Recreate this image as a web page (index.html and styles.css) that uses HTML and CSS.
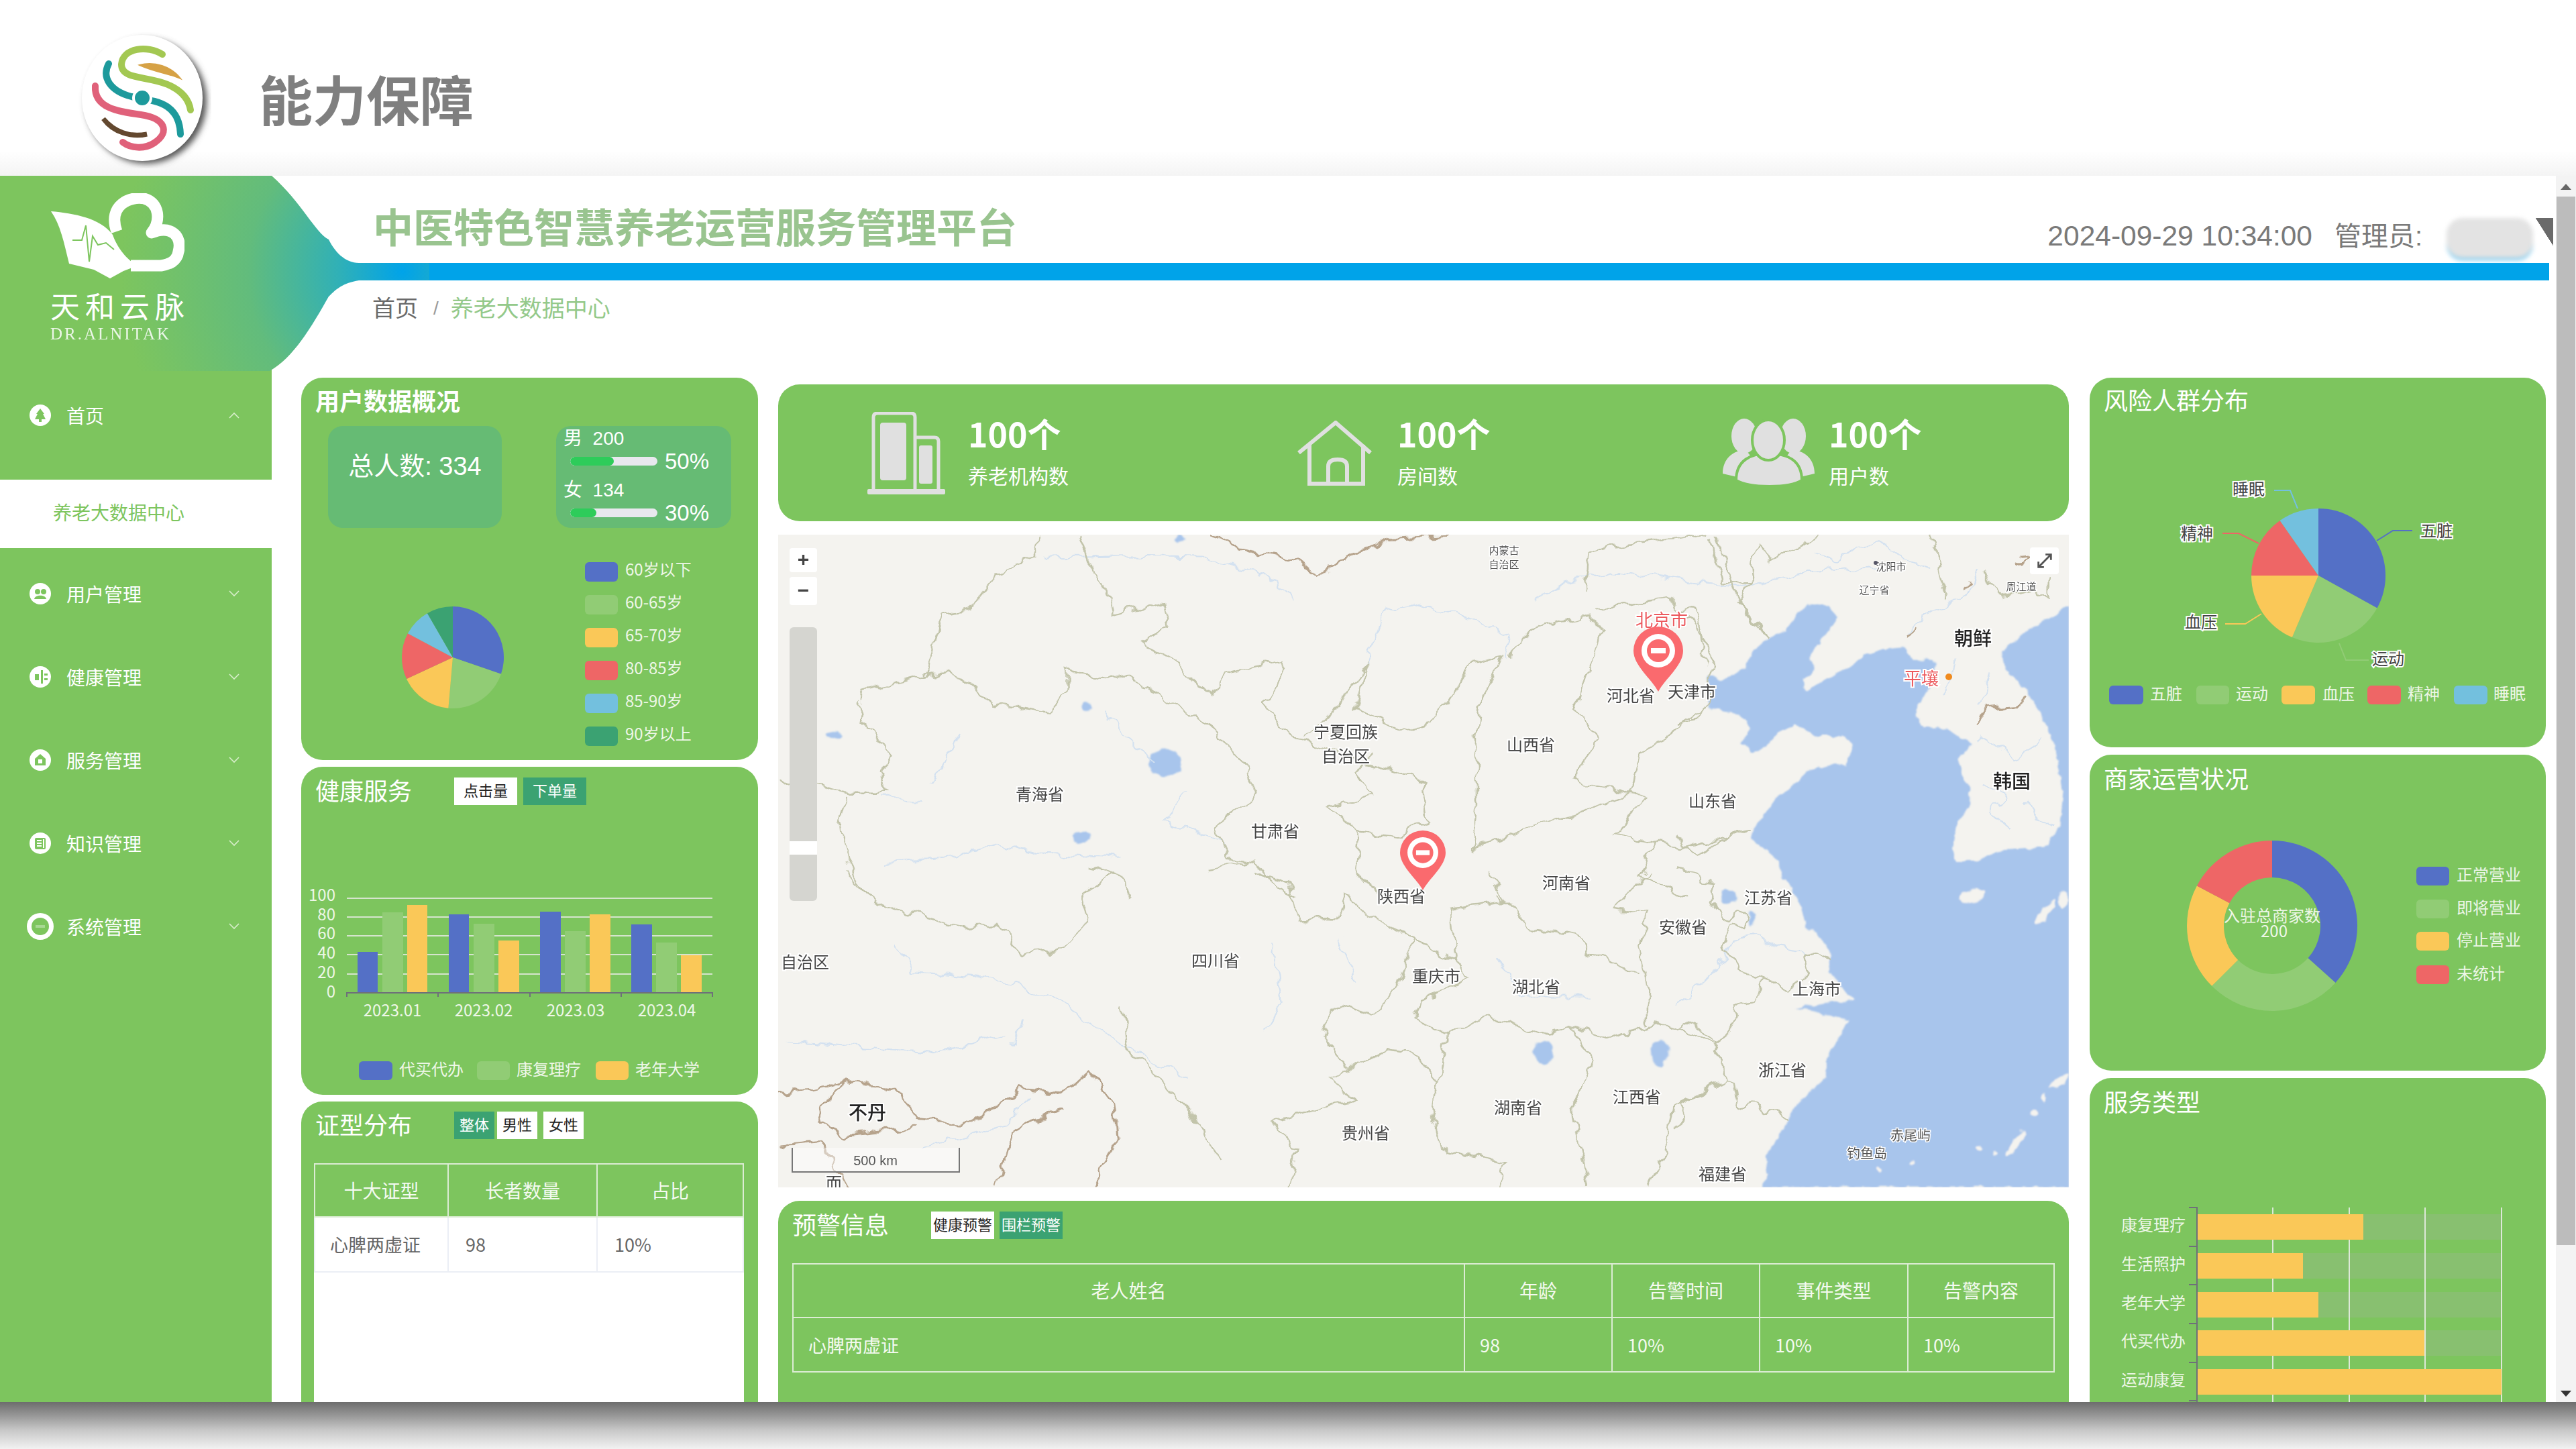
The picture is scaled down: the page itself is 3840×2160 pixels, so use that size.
FILE: index.html
```html
<!DOCTYPE html>
<html lang="zh">
<head>
<meta charset="utf-8">
<title>能力保障</title>
<link rel="stylesheet" href="styles.css">
</head>
<body>
<header class="slide-head">
  <svg class="slide-logo" viewBox="110 40 200 210" width="200" height="210">
    <defs><filter id="sh" x="-20%" y="-20%" width="140%" height="140%"><feGaussianBlur stdDeviation="5"/></filter></defs>
    <ellipse cx="213" cy="150" rx="90" ry="93" fill="#555" filter="url(#sh)"/>
    <ellipse cx="207" cy="145" rx="90" ry="94" fill="#fff"/>
    <g fill="none" stroke-linecap="round">
      <path d="M237,80 C215,66 178,70 176,95 C176,118 215,112 245,125 C268,135 277,150 279,163" stroke="#a3c852" stroke-width="10"/>
      <path d="M203,96 C225,90 250,98 264,116 C245,108 225,106 203,96Z" fill="#d6a246" stroke="#d6a246" stroke-width="2"/>
      <path d="M157,94 C146,115 160,135 191,143 C225,150 262,150 264,199" stroke="#1d9a9c" stroke-width="10"/>
      <path d="M137,127 C135,160 170,165 205,170 C240,175 250,195 225,212 C210,222 190,220 178,211" stroke="#e0617a" stroke-width="10"/>
      <path d="M149,176 C165,195 190,205 214,199 C190,203 165,198 149,176Z" fill="#63482f" stroke="#63482f" stroke-width="7"/>
    </g>
    <circle cx="207" cy="145" r="13" fill="#1d9a9c" stroke="#fff" stroke-width="4"/>
  </svg>
  <h1 class="slide-title">能力保障</h1>
</header>

<div class="frame">
  <svg class="wing" viewBox="0 0 640 300" width="640" height="300">
    <defs>
      <radialGradient id="wg" gradientUnits="userSpaceOnUse" cx="600" cy="143" r="420">
        <stop offset="0" stop-color="#00a3e9"/>
        <stop offset="0.22" stop-color="#2fb0b8"/>
        <stop offset="0.55" stop-color="#62bc7c"/>
        <stop offset="1" stop-color="#7dc55e"/>
      </radialGradient>
    </defs>
    <path d="M0,0 L405,0 C450,40 470,85 490,95 C500,115 515,130 535,130 L640,130 L640,156 L535,156 C510,160 500,170 490,180 C470,215 440,270 402,291 L0,291Z" fill="url(#wg)"/>
  </svg>

  <aside class="sidebar">
    <div class="brand">
      <svg class="brand-mark" viewBox="75 288 200 130" width="200" height="130">
        <path d="M76,315 C110,318 150,325 168,350 C175,370 190,388 205,396 L184,404 L164,415 L140,402 L103,393 C95,360 90,335 76,315Z" fill="#fff"/>
        <polyline points="108,358 122,358 128,336 133,390 138,352 146,365 158,362 170,372" fill="none" stroke="#7dc55e" stroke-width="2"/>
        <path d="M174,345 C160,305 195,292 215,296 C238,302 240,330 226,347 C255,335 272,352 266,375 C264,390 252,394 240,396 L195,396" fill="none" stroke="#fff" stroke-width="17" stroke-linejoin="round"/>
      </svg>
      <div class="brand-cn">天和云脉</div>
      <div class="brand-en">DR.ALNITAK</div>
    </div>
    <nav class="menu">
      <div class="menu-group">
        <a class="menu-item">
          <svg class="mi" viewBox="0 0 32 32"><circle cx="16" cy="16" r="16" fill="#fff"/><path d="M16,6 L22,14 L20,14 L24,22 L18,22 L18,26 L14,26 L14,22 L8,22 L12,14 L10,14Z" fill="#7dc55e"/></svg>
          <span>首页</span>
          <svg class="chev" viewBox="0 0 16 10"><polyline points="1,9 8,2 15,9"/></svg>
        </a>
      </div>
      <a class="menu-sub">养老大数据中心</a>
      <a class="menu-item">
        <svg class="mi" viewBox="0 0 32 32"><circle cx="16" cy="16" r="16" fill="#fff"/><circle cx="12" cy="13" r="4" fill="#7dc55e"/><circle cx="21" cy="13" r="4" fill="#7dc55e"/><path d="M7,24 C8,17 24,17 25,24Z" fill="#7dc55e"/></svg>
        <span>用户管理</span>
        <svg class="chev" viewBox="0 0 16 10"><polyline points="1,1 8,8 15,1"/></svg>
      </a>
      <a class="menu-item">
        <svg class="mi" viewBox="0 0 32 32"><circle cx="16" cy="16" r="16" fill="#fff"/><rect x="8" y="12" width="6" height="9" fill="#7dc55e"/><rect x="17" y="6" width="3" height="20" fill="#7dc55e"/><rect x="22" y="11" width="5" height="3" fill="#7dc55e"/><rect x="22" y="18" width="5" height="3" fill="#7dc55e"/></svg>
        <span>健康管理</span>
        <svg class="chev" viewBox="0 0 16 10"><polyline points="1,1 8,8 15,1"/></svg>
      </a>
      <a class="menu-item">
        <svg class="mi" viewBox="0 0 32 32"><circle cx="16" cy="16" r="16" fill="#fff"/><path d="M16,7 L24,14 L24,24 L8,24 L8,14Z" fill="#7dc55e"/><rect x="13" y="15" width="6" height="6" fill="#fff"/></svg>
        <span>服务管理</span>
        <svg class="chev" viewBox="0 0 16 10"><polyline points="1,1 8,8 15,1"/></svg>
      </a>
      <a class="menu-item">
        <svg class="mi" viewBox="0 0 32 32"><circle cx="16" cy="16" r="16" fill="#fff"/><rect x="8" y="8" width="16" height="17" rx="2" fill="#7dc55e"/><rect x="11" y="11" width="7" height="2" fill="#fff"/><rect x="11" y="15" width="7" height="2" fill="#fff"/><rect x="11" y="19" width="7" height="2" fill="#fff"/><rect x="20" y="10" width="2" height="13" fill="#fff"/></svg>
        <span>知识管理</span>
        <svg class="chev" viewBox="0 0 16 10"><polyline points="1,1 8,8 15,1"/></svg>
      </a>
      <a class="menu-item">
        <svg class="mi mi-sys" viewBox="0 0 40 40"><circle cx="20" cy="20" r="20" fill="#fff"/><circle cx="20" cy="20" r="13" fill="#7dc55e"/><rect x="13" y="18" width="14" height="4" fill="#a8d894"/></svg>
        <span>系统管理</span>
        <svg class="chev" viewBox="0 0 16 10"><polyline points="1,1 8,8 15,1"/></svg>
      </a>
    </nav>
  </aside>

  <main class="main">
    <div class="top">
      <div class="top-row">
        <div class="app-title">中医特色智慧养老运营服务管理平台</div>
        <div class="meta">
          <span class="clock">2024-09-29 10:34:00</span>
          <span class="who">管理员:</span>
          <span class="blob"></span>
          <span class="caret"></span>
        </div>
      </div>
      <div class="bar"></div>
      <div class="crumb"><span class="c1">首页</span><span class="sep">/</span><span class="c2">养老大数据中心</span></div>
    </div>

    <div class="board">
      <section class="col col-l">
        <div class="panel p-user">
          <h2 class="ptitle strong">用户数据概况</h2>
          <div class="tiles">
            <div class="tile tile-total">总人数: 334</div>
            <div class="tile tile-gender">
              <div class="g-label">男&nbsp;&nbsp;200</div>
              <div class="g-row"><div class="track"><div class="fill" style="width:50%"></div></div><span>50%</span></div>
              <div class="g-label">女&nbsp;&nbsp;134</div>
              <div class="g-row"><div class="track"><div class="fill" style="width:30%"></div></div><span>30%</span></div>
            </div>
          </div>
          <svg class="chart" viewBox="449 787 681 346" width="681" height="346">
            <path d="M675,980 L675,904 A76,76 0 0 1 746.9,1004.7Z" fill="#5470c6"/>
            <path d="M675,980 L746.9,1004.7 A76,76 0 0 1 668.4,1055.7Z" fill="#91cc75"/>
            <path d="M675,980 L668.4,1055.7 A76,76 0 0 1 606.1,1012.1Z" fill="#fac858"/>
            <path d="M675,980 L606.1,1012.1 A76,76 0 0 1 607.9,944.3Z" fill="#ee6666"/>
            <path d="M675,980 L607.9,944.3 A76,76 0 0 1 637,914.2Z" fill="#73c0de"/>
            <path d="M675,980 L637,914.2 A76,76 0 0 1 675,904Z" fill="#3ba272"/>
            <g class="lg">
              <rect x="872" y="838" width="49" height="29" rx="6" fill="#5470c6"/><text x="932" y="858">60岁以下</text>
              <rect x="872" y="887" width="49" height="29" rx="6" fill="#91cc75"/><text x="932" y="907">60-65岁</text>
              <rect x="872" y="936" width="49" height="29" rx="6" fill="#fac858"/><text x="932" y="956">65-70岁</text>
              <rect x="872" y="985" width="49" height="29" rx="6" fill="#ee6666"/><text x="932" y="1005">80-85岁</text>
              <rect x="872" y="1034" width="49" height="29" rx="6" fill="#73c0de"/><text x="932" y="1054">85-90岁</text>
              <rect x="872" y="1083" width="49" height="29" rx="6" fill="#3ba272"/><text x="932" y="1103">90岁以上</text>
            </g>
          </svg>
        </div>

        <div class="panel p-health">
          <div class="phead">
            <h2 class="ptitle">健康服务</h2>
            <div class="tabs tabs-wide"><span class="tab">点击量</span><span class="tab on">下单量</span></div>
          </div>
          <svg class="chart" viewBox="449 1204 681 428" width="681" height="428">
            <g class="grid">
              <line x1="517" x2="1062" y1="1339" y2="1339"/><line x1="517" x2="1062" y1="1367" y2="1367"/><line x1="517" x2="1062" y1="1395" y2="1395"/><line x1="517" x2="1062" y1="1423" y2="1423"/><line x1="517" x2="1062" y1="1452" y2="1452"/>
            </g>
            <g fill="#5470c6"><rect x="533" y="1419" width="30" height="61"/><rect x="669" y="1363" width="30" height="117"/><rect x="805" y="1359" width="31" height="121"/><rect x="941" y="1378" width="31" height="102"/></g>
            <g fill="#91cc75"><rect x="570" y="1360" width="31" height="120"/><rect x="706" y="1377" width="31" height="103"/><rect x="842" y="1388" width="31" height="92"/><rect x="978" y="1405" width="31" height="75"/></g>
            <g fill="#fac858"><rect x="607" y="1349" width="30" height="131"/><rect x="743" y="1402" width="31" height="78"/><rect x="879" y="1363" width="31" height="117"/><rect x="1015" y="1424" width="31" height="56"/></g>
            <path d="M517,1486 V1480 H1062 V1486 M653,1480 V1486 M790,1480 V1486 M926,1480 V1486" fill="none" stroke="#6e7079" stroke-width="2"/>
            <g class="axis" text-anchor="end"><text x="500" y="1343">100</text><text x="500" y="1372">80</text><text x="500" y="1400">60</text><text x="500" y="1429">40</text><text x="500" y="1458">20</text><text x="500" y="1487">0</text></g>
            <g class="axis" text-anchor="middle"><text x="585" y="1515">2023.01</text><text x="721" y="1515">2023.02</text><text x="858" y="1515">2023.03</text><text x="994" y="1515">2023.04</text></g>
            <g class="lg">
              <rect x="535" y="1582" width="50" height="28" rx="6" fill="#5470c6"/><text x="595" y="1603">代买代办</text>
              <rect x="711" y="1582" width="49" height="28" rx="6" fill="#91cc75"/><text x="770" y="1603">康复理疗</text>
              <rect x="888" y="1582" width="49" height="28" rx="6" fill="#fac858"/><text x="947" y="1603">老年大学</text>
            </g>
          </svg>
        </div>

        <div class="panel p-syn">
          <div class="phead">
            <h2 class="ptitle">证型分布</h2>
            <div class="tabs tabs-slim"><span class="tab on">整体</span><span class="tab">男性</span><span class="tab tab-gap">女性</span></div>
          </div>
          <div class="syn-wrap">
            <table class="tbl tbl-syn">
              <colgroup><col class="c199"><col class="c222"><col></colgroup>
              <thead><tr><th>十大证型</th><th>长者数量</th><th>占比</th></tr></thead>
              <tbody><tr><td>心脾两虚证</td><td class="ind">98</td><td class="ind">10%</td></tr></tbody>
            </table>
          </div>
        </div>
      </section>

      <section class="col col-c">
        <div class="stats">
          <div class="stat">
            <div class="stat-icon">
              <svg viewBox="0 0 116 123" width="116" height="123"><path d="M9,116 V8 Q9,2 15,2 H65 Q71,2 71,8 V116 M71,38 H100 Q106,38 106,44 V116" fill="none" stroke="#e0e0e0" stroke-width="5"/><rect x="19" y="16" width="39" height="86" rx="4" fill="#e0e0e0"/><rect x="77" y="50" width="20" height="57" rx="3" fill="#e0e0e0"/><rect x="0" y="115" width="116" height="8" rx="2" fill="#e0e0e0"/></svg>
            </div>
            <div class="stat-text"><b>100个</b><span>养老机构数</span></div>
          </div>
          <div class="stat">
            <div class="stat-icon">
              <svg viewBox="0 0 112 97" width="112" height="97"><path d="M3,48 L58,3 L110,48 M19,36 V94 H99 V36 M47,92 V68 Q47,58 61,58 Q75,58 75,68 V92" fill="none" stroke="#e0e0e0" stroke-width="6"/></svg>
            </div>
            <div class="stat-text"><b>100个</b><span>房间数</span></div>
          </div>
          <div class="stat">
            <div class="stat-icon stat-icon-wide">
              <svg viewBox="0 0 137 102" width="137" height="102"><ellipse cx="32" cy="26" rx="19" ry="26" fill="#e0e0e0"/><ellipse cx="105" cy="26" rx="19" ry="26" fill="#e0e0e0"/><path d="M0,82 C0,60 15,48 34,46 L60,80 L34,90Z M137,82 C137,60 122,48 103,46 L77,80 L103,90Z" fill="#e0e0e0"/><path d="M20,92 C20,62 42,52 68,52 C96,52 118,62 118,92 C100,104 40,104 20,92Z" fill="#e0e0e0" stroke="#7dc55e" stroke-width="4"/><ellipse cx="68" cy="32" rx="24" ry="30" fill="#e0e0e0" stroke="#7dc55e" stroke-width="4"/></svg>
            </div>
            <div class="stat-text"><b>100个</b><span>用户数</span></div>
          </div>
        </div>

        <div class="map">
          <svg class="map-svg" viewBox="1160 797 1924 973" width="1924" height="973">
            <defs>
              <filter id="coast" filterUnits="userSpaceOnUse" x="1160" y="797" width="1924" height="973">
                <feTurbulence type="fractalNoise" baseFrequency="0.07" numOctaves="2" seed="4" result="n"/>
                <feDisplacementMap in="SourceGraphic" in2="n" scale="10" xChannelSelector="R" yChannelSelector="G"/>
                <feGaussianBlur stdDeviation="0.8"/>
              </filter>
              <filter id="wiggle" filterUnits="userSpaceOnUse" x="1160" y="797" width="1924" height="973">
                <feTurbulence type="fractalNoise" baseFrequency="0.045" numOctaves="2" seed="9" result="n"/>
                <feDisplacementMap in="SourceGraphic" in2="n" scale="22" xChannelSelector="R" yChannelSelector="G"/>
                <feGaussianBlur stdDeviation="0.7"/>
              </filter>
            </defs>
            <rect x="1160" y="797" width="1924" height="973" fill="#f4f3ef"/>
            <g filter="url(#coast)">
              <g transform="translate(2500 797) scale(.376 .3333)">
                <path class="sea" d="M520,310 L600,320 L640,370 L610,420 L560,490 L525,550 L550,610 L500,650 L505,700 L560,670 L620,630 L680,590 L740,540 L820,510 L900,500 L930,560 L1020,560 L1020,600 L1000,680 L960,760 L940,800 L980,860 L1080,870 L1140,920 L1170,940 L1110,1000 L1130,1080 L1160,1130 L1160,1210 L1110,1300 L1090,1400 L1110,1470 L1180,1460 L1300,1410 L1460,1400 L1520,1300 L1530,1150 L1500,950 L1430,780 L1380,690 L1300,600 L1290,520 L1400,420 L1555,320 L1600,300 L1600,1540 L420,1540 L400,1460 L350,1410 L290,1350 L330,1270 L400,1170 L470,1110 L520,1060 L600,1030 L670,1030 L700,930 L640,900 L560,900 L470,850 L400,890 L350,950 L300,970 L255,930 L290,870 L250,800 L180,790 L130,770 L120,630 L180,650 L270,600 L300,520 L350,470 L430,430 L480,350Z"/>
              </g>
              <g transform="translate(2500 1290) scale(.376 .3333)">
                <path class="sea" d="M415,-20 L440,80 L490,180 L510,270 L560,310 L610,400 L600,470 L650,540 L700,600 L560,620 L470,640 L600,670 L680,690 L640,780 L590,860 L590,950 L520,1020 L460,1090 L430,1150 L400,1220 L350,1300 L360,1380 L335,1440 L1600,1440 L1600,-20Z"/>
                <ellipse class="isle" cx="1170" cy="135" rx="55" ry="28" transform="rotate(-15 1170 135)"/>
                <ellipse class="isle" cx="1460" cy="210" rx="18" ry="65" transform="rotate(35 1460 210)"/>
                <ellipse class="isle" cx="1530" cy="150" rx="16" ry="40"/>
                <ellipse class="isle" cx="1515" cy="965" rx="16" ry="50" transform="rotate(50 1515 965)"/>
                <ellipse class="isle" cx="1345" cy="1240" rx="16" ry="70" transform="rotate(30 1345 1240)"/>
                <ellipse class="isle" cx="1458" cy="1040" rx="10" ry="22"/>
                <ellipse class="isle" cx="1415" cy="1105" rx="14" ry="10"/>
                <circle class="isle" cx="930" cy="1330" r="10"/>
                <circle class="isle" cx="800" cy="1358" r="12"/>
                <circle class="isle" cx="1200" cy="1265" r="11"/>
                <circle class="isle" cx="1262" cy="1288" r="11"/>
              </g>
              <g transform="translate(1150 540) scale(1.2437 0.5102)">
                <ellipse class="sea" cx="472" cy="1170" rx="20" ry="38"/>
                <ellipse class="sea" cx="378" cy="1005" rx="7" ry="14"/>
                <ellipse class="sea" cx="75" cy="1090" rx="10" ry="10"/>
                <ellipse class="sea" cx="372" cy="1388" rx="12" ry="16"/>
                <ellipse class="sea" cx="490" cy="515" rx="6" ry="9"/>
              </g>
              <g transform="translate(2500 1290) scale(.376 .3333)">
                <ellipse class="sea" cx="200" cy="140" rx="32" ry="35"/>
                <ellipse class="sea" cx="295" cy="235" rx="12" ry="35"/>
              </g>
              <g transform="translate(1150 1300) scale(1.2437 0.5485)">
                <ellipse class="sea" cx="925" cy="490" rx="12" ry="32"/>
                <ellipse class="sea" cx="1065" cy="490" rx="10" ry="36"/>
              </g>
            </g>
            <g filter="url(#wiggle)">
              <g transform="translate(1150 540) scale(1.2437 0.5102)">
                <g class="river">
                  <path d="M715,880 L735,720 L770,705 L840,750 L885,800 L880,860"/>
                  <path d="M400,1020 L430,1110 L460,1170 M225,1090 L190,1240 M130,1275 L180,1280 M495,1250 L470,1340 L540,1400"/>
                  <path d="M325,570 L420,565 L520,570 L590,620 L625,690"/>
                  <path d="M915,690 L950,640 L1010,610 L1100,640 L1160,660 L1240,610 L1330,600"/>
                  <path d="M135,1460 L210,1450 L270,1405 L330,1440 L420,1450"/>
                </g>
                <g class="prov">
                  <path d="M105,990 L110,960 L185,915 L210,905 L240,940 L265,1000 L330,1020 L355,960 L355,900 L400,925 L430,915 L470,985 L530,1070 L560,1150 L580,1250 L570,1300 L530,1360 L550,1450 L580,1460 L600,1520 L630,1568"/>
                  <path d="M185,915 L205,740 L240,720 L270,620 L290,600 L320,570 L320,505"/>
                  <path d="M370,505 L385,620 L405,690 L410,740 L470,700 L475,770 L445,820 L490,880 L510,950 L530,965 L545,910 L610,870 L615,900 L590,1000 L620,1090 L640,1110 L690,1150 L780,1220 L785,1340 L755,1390 L705,1370 L695,1350 L665,1300 L720,1270 L700,1200 L720,1150"/>
                  <path d="M640,1100 L680,1000 L715,880 L700,1010 L760,1080 L790,1060 L820,960 L840,880 L875,860 L850,1000 L845,1100 L845,1300 L840,1430"/>
                  <path d="M885,855 L920,770 L980,740 L995,790 L980,900 L965,1010 L990,1100 L960,1220 L1000,1240 L1030,1260 L965,1320 L910,1360 L840,1425"/>
                  <path d="M1030,1260 L1050,1270 L1010,1380 L1060,1400 L1100,1420 L1170,1370"/>
                  <path d="M975,680 L980,560 L1000,540 L1120,505 M1075,690 L1110,780 L1130,880 L1120,1010 L1090,1060 L1040,1150 L1030,1260"/>
                  <path d="M1075,690 L990,720 M1130,510 L1160,700 L1195,800"/>
                  <path d="M100,990 L120,1080 L145,1150 L130,1190 L140,1260 L90,1260 L40,1215 L10,1230 M90,1270 L80,1350 L100,1500 L120,1568"/>
                  <path d="M380,1470 L420,1500 L430,1568 M520,1480 L570,1460"/>
                  <path d="M705,1370 L700,1500 L740,1568 M1060,1400 L1040,1500 L1100,1568"/>
                </g>
                <g class="border">
                  <path d="M530,505 L560,545 L630,580 L650,620 L740,515 L820,505"/>
                </g>
              </g>
              <g transform="translate(2500 797) scale(.376 .3333)">
                <g class="river">
                  <path d="M905,455 L960,380 L1050,320 L1140,280 L1200,150"/>
                  <path d="M1100,560 L1090,640 L1050,690 L1060,730 M1240,620 L1200,760 M1200,900 L1290,960 L1340,1010 L1450,920"/>
                  <path d="M1220,1110 L1300,1160 L1240,1240 L1320,1320 M1390,1200 L1420,1280 L1480,1300"/>
                  <path d="M540,80 L620,120 L720,50 L800,40 L900,110 L1000,150"/>
                </g>
                <g class="prov">
                  <path d="M360,460 L320,390 L290,350 L240,300 L290,220 L280,130 L320,30 L380,130 L430,80 L560,0"/>
                  <path d="M1000,0 L1030,70 L1050,200 L1070,260 L1060,300 M1220,170 L1240,240 L1300,270 L1420,250 L1470,280 L1470,180"/>
                  <path d="M0,1340 L30,1400 L70,1430 L130,1400 L240,1330 L290,1320"/>
                  <path d="M0,340 L70,345 L100,460 L90,530 L130,590 M0,845 L80,830 L110,770"/>
                  <path d="M130,20 L160,120 L180,220 L290,220"/>
                </g>
                <g class="border">
                  <path d="M905,455 L960,410 M1130,250 L1160,210 M1185,850 L1230,770 L1360,760 L1385,710 M1350,100 L1400,95 L1350,130"/>
                </g>
              </g>
              <g transform="translate(2500 1290) scale(.376 .3333)">
                <g class="river">
                  <path d="M0,630 L100,520 L190,420 L220,330 L340,310 L400,370 L480,380 L520,400"/>
                </g>
                <g class="prov">
                  <path d="M0,10 L80,30 L100,70 L150,75 L130,150 L170,230 L210,250 L250,210 L280,240 L270,285 L210,270 L180,360 L210,410 L240,470 L300,490 L335,505 L380,520 L430,560 L470,530 L510,490 L520,440 L510,395 L560,395 L610,420"/>
                  <path d="M335,505 L300,620 L240,640 L220,720 L155,780 L40,700 L0,740"/>
                  <path d="M155,780 L140,830 L185,890 L190,960 L100,1020 L10,1060 L30,1130 L0,1160"/>
                  <path d="M190,960 L225,965 L240,1080 L320,1060 L350,1110 L420,1105 L435,1150"/>
                </g>
              </g>
              <g transform="translate(1150 1300) scale(1.2437 0.5485)">
                <g class="river">
                  <path d="M150,190 L170,270 L270,290 L340,340 L420,470 L500,560 M20,460 L200,490 L280,440 M300,400 L290,470"/>
                  <path d="M180,750 L280,690 L310,610 M600,200 L610,350 L590,430 M680,180 L700,300 M870,240 L900,340 L980,340"/>
                </g>
                <g class="prov">
                  <path d="M90,0 L130,90 L230,150 L270,140 L300,220 L350,210 L380,130 L370,60 L410,0"/>
                  <path d="M580,0 L620,30 L630,130 L680,130 L690,60 L720,130 L770,180 L820,240 L835,290 L780,350 L770,400 L810,440 L800,560 L790,680 L810,760 L880,790 L870,857"/>
                  <path d="M770,180 L750,320 L720,390 L680,360 L660,440 L690,540 L740,480 L770,490 L800,570"/>
                  <path d="M690,540 L670,560 L700,620 L660,640 L600,680 L630,760 L620,857"/>
                  <path d="M810,440 L860,390 L920,440 L960,420 L1000,450 L1060,410 L1130,460"/>
                  <path d="M960,420 L985,520 L960,640 L980,857"/>
                  <path d="M1050,0 L1010,100 L1050,110 L1040,200 L1050,300 L1050,410 M870,60 L910,150 L970,170 L980,220 L1040,280"/>
                  <path d="M820,240 L815,100 L880,80 L860,0 M1135,575 L1080,640 L1070,760 L1050,857"/>
                  <path d="M420,360 L430,500 L450,520 L490,620 L540,780"/>
                </g>
                <g class="border">
                  <path d="M10,600 L50,590 L90,570 L150,590 L175,670 L240,685 L300,590 L350,600 L380,540 L410,630 L415,720 L385,857"/>
                  <path d="M55,680 L90,715 L175,695 M55,680 L65,620 L90,570 M300,690 L350,650 L290,700 L270,857 M10,740 L60,730 L90,857"/>
                </g>
              </g>
            </g>
            <g class="mlabel">
              <text x="1550" y="1193">青海省</text><text x="2006" y="1100">宁夏回族</text><text x="2006" y="1136">自治区</text>
              <text x="2282" y="1119">山西省</text><text x="1901" y="1248">甘肃省</text><text x="2553" y="1203">山东省</text>
              <text x="2335" y="1325">河南省</text><text x="2431" y="1046">河北省</text><text x="2522" y="1040">天津市</text>
              <text x="2089" y="1345">陕西省</text><text x="2636" y="1347">江苏省</text><text x="2509" y="1391">安徽省</text>
              <text x="1812" y="1441">四川省</text><text x="1200" y="1443">自治区</text><text x="2141" y="1464">重庆市</text>
              <text x="2290" y="1480">湖北省</text><text x="2708" y="1483">上海市</text><text x="2657" y="1604">浙江省</text>
              <text x="2440" y="1644">江西省</text><text x="2263" y="1660">湖南省</text><text x="2036" y="1698">贵州省</text>
              <text x="2568" y="1759">福建省</text>
            </g>
            <g class="mlabel m-sm">
              <text x="2242" y="826">内蒙古</text><text x="2242" y="847">自治区</text><text x="2819" y="850">沈阳市</text>
              <text x="2794" y="885">辽宁省</text><text x="3013" y="880">周江道</text>
            </g>
            <g class="mlabel m-md"><text x="2848" y="1700">赤尾屿</text><text x="2783" y="1727">钓鱼岛</text></g>
            <g class="mlabel m-lg">
              <text x="2941" y="962">朝鲜</text><text x="2999" y="1175">韩国</text><text x="1293" y="1669">不丹</text>
            </g>
            <g class="mlabel m-red"><text x="2477" y="934">北京市</text><text x="2864" y="1021">平壤</text></g>
            <text class="mlabel" x="1243" y="1772">而</text>
            <circle cx="2905" cy="1009" r="5" fill="#f08a1d"/>
            <circle cx="2796" cy="839" r="3" fill="#556"/>
            <path d="M1181,1711 V1747 H1430 V1711" fill="rgba(255,255,255,.45)" stroke="#777" stroke-width="2"/>
            <text class="scale-t" x="1305" y="1737">500 km</text>
          </svg>
          <div class="zoom-ctl"><span class="zbtn">+</span><span class="zbtn zlow">−</span></div>
          <div class="zslider"><span class="zhandle"></span></div>
          <div class="zfull">
            <svg viewBox="0 0 24 24" width="28" height="28"><path d="M5,19 L19,5 M13,4 H20 V11 M4,13 V20 H11" fill="none" stroke="#555" stroke-width="2.4"/></svg>
          </div>
          <svg class="pin pin-bj" viewBox="0 0 76 98" width="76" height="98"><path d="M38,97 C28,78 1,58 1,36 A37,36 0 0 1 75,36 C75,58 48,78 38,97Z" fill="#fa6a6e"/><circle cx="38" cy="36" r="25" fill="#fff"/><circle cx="38" cy="36" r="17" fill="#fa6a6e"/><rect x="27" y="32" width="22" height="8" fill="#fff"/></svg>
          <svg class="pin pin-sx" viewBox="0 0 76 98" width="76" height="90"><path d="M38,97 C28,78 1,58 1,36 A37,36 0 0 1 75,36 C75,58 48,78 38,97Z" fill="#fa6a6e"/><circle cx="38" cy="36" r="25" fill="#fff"/><circle cx="38" cy="36" r="17" fill="#fa6a6e"/><rect x="27" y="32" width="22" height="8" fill="#fff"/></svg>
        </div>

        <div class="panel p-warn">
          <div class="phead">
            <h2 class="ptitle">预警信息</h2>
            <div class="tabs tabs-warn"><span class="tab">健康预警</span><span class="tab on">围栏预警</span></div>
          </div>
          <table class="tbl tbl-warn">
            <colgroup><col class="c1001"><col class="c220"><col class="c220"><col class="c221"><col></colgroup>
            <thead><tr><th>老人姓名</th><th>年龄</th><th>告警时间</th><th>事件类型</th><th>告警内容</th></tr></thead>
            <tbody><tr><td>心脾两虚证</td><td>98</td><td>10%</td><td>10%</td><td>10%</td></tr></tbody>
          </table>
        </div>
      </section>

      <section class="col col-r">
        <div class="panel p-risk">
          <h2 class="ptitle">风险人群分布</h2>
          <svg class="chart" viewBox="3115 622 681 492" width="681" height="492">
            <path d="M3456,858 L3456,758 A100,100 0 0 1 3543.5,906.5Z" fill="#5470c6"/>
            <path d="M3456,858 L3543.5,906.5 A100,100 0 0 1 3416.9,950.1Z" fill="#91cc75"/>
            <path d="M3456,858 L3416.9,950.1 A100,100 0 0 1 3356,858Z" fill="#fac858"/>
            <path d="M3456,858 L3356,858 A100,100 0 0 1 3398.6,776.1Z" fill="#ee6666"/>
            <path d="M3456,858 L3398.6,776.1 A100,100 0 0 1 3456,758Z" fill="#73c0de"/>
            <g fill="none" stroke-width="2">
              <polyline points="3390,731 3414,731 3425,758" stroke="#73c0de"/>
              <polyline points="3313,795 3337,795 3367,810" stroke="#ee6666"/>
              <polyline points="3317,930 3347,930 3371,915" stroke="#fac858"/>
              <polyline points="3531,984 3497,984 3487,959" stroke="#91cc75"/>
              <polyline points="3596,791 3567,791 3543,806" stroke="#5470c6"/>
            </g>
            <g class="plabel">
              <text x="3352" y="738">睡眠</text><text x="3275" y="804">精神</text><text x="3281" y="936">血压</text><text x="3560" y="991">运动</text><text x="3632" y="800">五脏</text>
            </g>
            <g class="lg">
              <rect x="3144" y="1022" width="51" height="28" rx="6" fill="#5470c6"/><text x="3205" y="1043">五脏</text>
              <rect x="3274" y="1022" width="49" height="28" rx="6" fill="#91cc75"/><text x="3333" y="1043">运动</text>
              <rect x="3401" y="1022" width="50" height="28" rx="6" fill="#fac858"/><text x="3462" y="1043">血压</text>
              <rect x="3529" y="1022" width="50" height="28" rx="6" fill="#ee6666"/><text x="3589" y="1043">精神</text>
              <rect x="3658" y="1022" width="50" height="28" rx="6" fill="#73c0de"/><text x="3717" y="1043">睡眠</text>
            </g>
          </svg>
        </div>

        <div class="panel p-biz">
          <h2 class="ptitle">商家运营状况</h2>
          <svg class="chart" viewBox="3115 1186 681 410" width="681" height="410">
            <path d="M3387,1253 A127,127 0 0 1 3481.4,1465 L3440.5,1428.2 A72,72 0 0 0 3387,1308Z" fill="#5470c6"/>
            <path d="M3481.4,1465 A127,127 0 0 1 3297.2,1469.8 L3336.1,1430.9 A72,72 0 0 0 3440.5,1428.2Z" fill="#91cc75"/>
            <path d="M3297.2,1469.8 A127,127 0 0 1 3274.9,1320.4 L3323.4,1346.2 A72,72 0 0 0 3336.1,1430.9Z" fill="#fac858"/>
            <path d="M3274.9,1320.4 A127,127 0 0 1 3387,1253 L3387,1308 A72,72 0 0 0 3323.4,1346.2Z" fill="#ee6666"/>
            <g class="lg" text-anchor="middle"><text x="3387" y="1374">入驻总商家数</text><text x="3390" y="1397">200</text></g>
            <g class="lg">
              <rect x="3602" y="1292" width="49" height="28" rx="6" fill="#5470c6"/><text x="3662" y="1313">正常营业</text>
              <rect x="3602" y="1341" width="49" height="28" rx="6" fill="#91cc75"/><text x="3662" y="1362">即将营业</text>
              <rect x="3602" y="1389" width="49" height="28" rx="6" fill="#fac858"/><text x="3662" y="1410">停止营业</text>
              <rect x="3602" y="1439" width="49" height="28" rx="6" fill="#ee6666"/><text x="3662" y="1460">未统计</text>
            </g>
          </svg>
        </div>

        <div class="panel p-svc">
          <h2 class="ptitle">服务类型</h2>
          <svg class="chart" viewBox="3115 1669 681 460" width="681" height="460">
            <g fill="#88c070">
              <rect x="3275" y="1811" width="454" height="38"/><rect x="3275" y="1869" width="454" height="38"/><rect x="3275" y="1927" width="454" height="38"/><rect x="3275" y="1984" width="454" height="38"/><rect x="3275" y="2042" width="454" height="38"/>
            </g>
            <g class="vgrid"><line x1="3388" x2="3388" y1="1801" y2="2120"/><line x1="3502" x2="3502" y1="1801" y2="2120"/><line x1="3615" x2="3615" y1="1801" y2="2120"/><line x1="3729" x2="3729" y1="1801" y2="2120"/></g>
            <g fill="#fac858">
              <rect x="3275" y="1811" width="248" height="38"/><rect x="3275" y="1869" width="158" height="38"/><rect x="3275" y="1927" width="181" height="38"/><rect x="3275" y="1984" width="339" height="38"/><rect x="3275" y="2042" width="454" height="38"/>
            </g>
            <path d="M3263,1801 H3275 V2120 M3263,1859 H3275 M3263,1916 H3275 M3263,1974 H3275 M3263,2032 H3275 M3263,2089 H3275" fill="none" stroke="#6e7079" stroke-width="2"/>
            <g class="lg" text-anchor="end"><text x="3258" y="1836">康复理疗</text><text x="3258" y="1894">生活照护</text><text x="3258" y="1952">老年大学</text><text x="3258" y="2009">代买代办</text><text x="3258" y="2067">运动康复</text></g>
          </svg>
        </div>
      </section>
    </div>
  </main>

  <div class="scrollbar">
    <svg class="arrow" viewBox="0 0 16 10" width="16" height="10"><polygon points="0,10 8,1 16,10"/></svg>
    <div class="thumb"></div>
    <svg class="arrow arrow-d" viewBox="0 0 16 10" width="16" height="10"><polygon points="0,0 8,9 16,0"/></svg>
  </div>
</div>
<div class="under"></div>
</body>
</html>
```
FILE: styles.css
```css
* { box-sizing: border-box; }
html, body { margin: 0; padding: 0; }
body {
  width: 3840px;
  height: 2160px;
  overflow: hidden;
  background: #fff;
  font-family: "Liberation Sans", "Noto Sans CJK SC", sans-serif;
  color: #fff;
  display: flex;
  flex-direction: column;
}
h1, h2 { margin: 0; font-weight: 400; }

/* slide header */
.slide-head {
  height: 262px;
  flex: none;
  display: flex;
  align-items: center;
  padding-left: 115px;
  background: linear-gradient(#fff 225px, #f4f4f4 262px);
}
.slide-logo { margin-top: 30px; flex: none; }
.slide-title {
  margin: 28px 0 0 71px;
  font-family: "Noto Sans CJK SC", sans-serif;
  font-size: 80px;
  font-weight: 700;
  color: #7f7f7f;
  line-height: 100px;
}

/* frame */
.frame {
  position: relative;
  height: 1828px;
  flex: none;
  display: flex;
  overflow: hidden;
  background: #fff;
}
.wing { position: absolute; left: 0; top: 0; z-index: 1; }
.under {
  height: 70px;
  flex: none;
  background: linear-gradient(#6d6d6d, #999 30%, #c8c8c8 60%, #f2f2f2);
}

/* sidebar */
.sidebar {
  width: 405px;
  flex: none;
  background: #7dc55e;
}
.brand {
  position: relative;
  z-index: 2;
  height: 295px;
  padding: 26px 0 0 75px;
}
.brand-mark { display: block; }
.brand-cn {
  width: 204px;
  margin-top: 18px;
  font-family: "Liberation Serif", "Noto Sans CJK SC", serif;
  font-size: 44px;
  line-height: 48px;
  letter-spacing: 8px;
  white-space: nowrap;
}
.brand-en {
  width: 210px;
  font-family: "Liberation Serif", serif;
  font-size: 25px;
  line-height: 28px;
  letter-spacing: 3px;
  opacity: .85;
  white-space: nowrap;
}
.menu { position: relative; z-index: 2; padding-top: 0; }
.menu-group { height: 158px; }
.menu-item {
  height: 124px;
  display: flex;
  align-items: center;
  padding-left: 44px;
  font-size: 28px;
  color: #fff;
}
.mi { width: 32px; height: 32px; flex: none; margin-right: 23px; }
.mi-sys { width: 40px; height: 40px; margin-left: -4px; margin-right: 19px; }
.menu-item span { flex: 1; }
.chev { width: 16px; height: 10px; flex: none; margin-right: 48px; }
.chev polyline { fill: none; stroke: #d8eecb; stroke-width: 1.6; }
.menu-sub {
  display: block;
  height: 102px;
  margin-bottom: 6px;
  padding-left: 79px;
  background: #fff;
  color: #7dc55e;
  font-size: 28px;
  line-height: 102px;
}

/* main */
.main { width: 3405px; flex: none; display: flex; flex-direction: column; }
.top { height: 301px; flex: none; }
.top-row {
  height: 130px;
  display: flex;
  justify-content: space-between;
  padding-left: 151px;
}
.app-title {
  font-family: "Noto Sans CJK SC", sans-serif;
  font-size: 60px;
  font-weight: 700;
  color: #99c48f;
  line-height: 148px;
  height: 130px;
}
.meta { display: flex; align-items: flex-start; padding-top: 63px; color: #7a7a7a; }
.clock { font-size: 42.5px; line-height: 54px; margin-right: 33px; white-space: nowrap; }
.who { font-size: 40px; line-height: 54px; width: 167px; white-space: nowrap; }
.blob {
  width: 129px;
  height: 60px;
  border-radius: 24px;
  background: #e3e3e3;
  box-shadow: 0 3px 0 #5bc0f0;
  filter: blur(3px);
  margin-right: 4px;
}
.caret {
  width: 26px;
  height: 41px;
  margin-right: 4px;
  background: linear-gradient(to top right, transparent 49%, #6a6a6a 50%);
}
.bar { height: 26px; margin-right: 10px; background: #00a3e9; }
.crumb {
  margin-top: 17px;
  padding-left: 150px;
  line-height: 50px;
  font-size: 34px;
  display: flex;
}
.c1 { color: #6a6a6a; }
.sep { color: #999; margin: 0 18px 0 23px; font-size: 28px; }
.c2 { color: #94c98a; font-size: 34px; }

/* board */
.board {
  display: grid;
  grid-template-columns: 681px 1924px 681px;
  column-gap: 30px;
  padding-left: 44px;
}
.col { display: flex; flex-direction: column; }
.col-l { gap: 10px; }
.col-c { gap: 20px; padding-top: 10px; }
.col-r { gap: 11px; margin-left: 1px; }

.panel {
  background: #7dc55e;
  border-radius: 32px;
  flex: none;
}
.ptitle {
  font-family: "Noto Sans CJK SC", sans-serif;
  font-size: 36px;
  line-height: 46px;
  padding: 0 0 4px 21px;
  white-space: nowrap;
  flex: none;
}
.ptitle.strong { font-weight: 700; }
.chart { display: block; }
.chart text { font-family: "Noto Sans CJK SC", sans-serif; }
.lg text, .axis text { fill: #eef7e8; font-size: 24px; }
.lg text { font-size: 24px; }
.grid line { stroke: #d5e4cd; stroke-width: 2; }
.vgrid line { stroke: #dde8d8; stroke-width: 2; }
.plabel text { fill: #444; font-size: 24px; text-anchor: middle; stroke: #fff; stroke-width: 4px; paint-order: stroke; }

.phead { display: flex; align-items: center; height: 50px; }
.tabs { display: flex; margin-left: 63px; }
.tab {
  background: #fff;
  color: #222;
  font-size: 22px;
  height: 41px;
  line-height: 41px;
  text-align: center;
}
.tab.on { background: #3ba272; color: #fff; }
.tabs-wide { gap: 9px; }
.tabs-wide .tab { width: 94px; }
.tabs-slim { gap: 4px; }
.tabs-slim .tab { width: 60px; }
.tabs-slim .tab-gap { margin-left: 5px; }
.tabs-warn { gap: 8px; }
.tabs-warn .tab { width: 94px; font-size: 22px; white-space: nowrap; }

/* user panel */
.p-user { height: 570px; padding-top: 10px; }
.tiles { display: flex; gap: 81px; margin: 12px 0 0 40px; height: 152px; }
.tile { background: #66bb74; border-radius: 22px; }
.tile-total {
  width: 259px;
  font-size: 38px;
  line-height: 120px;
  text-align: center;
  white-space: nowrap;
}
.tile-gender { width: 261px; padding: 3px 0 0 11px; }
.g-label { font-size: 28px; line-height: 32px; height: 32px; }
.g-row { display: flex; align-items: center; height: 45px; padding: 0 0 10px 10px; }
.g-row span { font-size: 33px; margin-left: 11px; }
.track { width: 130px; height: 13px; border-radius: 7px; background: #e8e8ee; overflow: hidden; }
.fill { height: 100%; background: #2ecc5a; border-radius: 7px; }

.p-health { height: 489px; padding-top: 11px; }
.p-syn { height: 600px; padding-top: 10px; }
.syn-wrap {
  margin: 32px 21px 0 19px;
  height: 500px;
  background: #fff;
}
.tbl { border-collapse: collapse; table-layout: fixed; width: 100%; font-family: "Noto Sans CJK SC", sans-serif; }
.tbl th { font-weight: 400; font-size: 28px; color: #f4faf0; border: 2px solid #dcecd4; padding-bottom: 3px; }
.tbl td { font-size: 27px; padding-bottom: 2px; }
.tbl-syn thead { background: #7dc55e; }
.tbl-syn th { height: 79px; }
.tbl-syn td { height: 82px; color: #666; border: 2px solid #ebeef5; padding-left: 22px; }
.tbl-syn td.ind { padding-left: 25px; }
.c199 { width: 199px; }
.c222 { width: 222px; }

/* stats */
.stats {
  height: 204px;
  flex: none;
  background: #7dc55e;
  border-radius: 32px;
  padding-left: 133px;
  display: grid;
  grid-template-columns: 640px 635px 1fr;
  align-items: center;
}
.stat { display: flex; align-items: center; }
.stat-icon { width: 150px; flex: none; display: flex; }
.stat-icon-wide { width: 158px; }
.stat-text { display: flex; flex-direction: column; padding-top: 10px; }
.stat-text b { font-size: 50px; line-height: 62px; font-family: "Noto Sans CJK SC", sans-serif; }
.stat-text span { font-size: 30px; line-height: 70px; }

/* map */
.map { position: relative; height: 973px; flex: none; overflow: hidden; }
.map-svg { display: block; }
.sea { fill: #a8c5ec; }
.isle { fill: #f4f3ef; }
.river path { fill: none; stroke: #d3e1f0; stroke-width: 2; vector-effect: non-scaling-stroke; }
.prov path { fill: none; stroke: #c2c4aa; stroke-width: 2.5; vector-effect: non-scaling-stroke; }
.border path { fill: none; stroke: #b6a38c; stroke-width: 3; vector-effect: non-scaling-stroke; }
.mlabel {
  font-family: "Noto Sans CJK SC", sans-serif;
  font-size: 24px;
  fill: #444;
  text-anchor: middle;
  stroke: #fff;
  stroke-width: 4px;
  paint-order: stroke;
}
.m-sm { font-size: 15px; stroke-width: 3px; fill: #555; }
.m-md { font-size: 20px; stroke-width: 3px; fill: #555; }
.m-lg { font-size: 28px; font-weight: 500; fill: #222; }
.m-red { fill: #ec5a5e; font-size: 26px; }
.scale-t { font-family: "Liberation Sans", sans-serif; font-size: 20px; fill: #555; text-anchor: middle; }
.zoom-ctl { position: absolute; left: 17px; top: 20px; display: flex; flex-direction: column; gap: 7px; }
.zbtn {
  width: 41px; height: 36px; background: #fff; color: #444;
  font-size: 30px; font-weight: 700; line-height: 34px; text-align: center; border-radius: 4px;
}
.zlow { height: 42px; line-height: 40px; }
.zslider { position: absolute; left: 17px; top: 138px; width: 41px; height: 408px; background: #d5d5d0; border-radius: 6px; }
.zhandle { position: absolute; left: 0; top: 319px; width: 41px; height: 20px; background: #fff; }
.zfull {
  position: absolute; left: 1866px; top: 19px; width: 43px; height: 40px; background: #fff;
  display: flex; align-items: center; justify-content: center; border-radius: 4px;
}
.pin { position: absolute; }
.pin-bj { left: 1274px; top: 137px; }
.pin-sx { left: 923px; top: 441px; }

/* warn */
.p-warn { height: 340px; padding-top: 11px; }
.tbl-warn { margin: 32px 21px 0 21px; width: 1882px; }
.tbl-warn th { height: 80px; }
.tbl-warn td { height: 81px; border: 2px solid #dcecd4; padding-left: 22px; color: #f4faf0; }
.c1001 { width: 1001px; }
.c220 { width: 220px; }
.c221 { width: 221px; }

/* right */
.p-risk { height: 551px; padding-top: 9px; }
.p-biz { height: 471px; padding-top: 11px; }
.p-svc { height: 530px; padding-top: 11px; }

/* scrollbar */
.scrollbar {
  width: 30px;
  flex: none;
  background: #f3f3f3;
  display: flex;
  flex-direction: column;
  align-items: center;
  position: relative;
}
.arrow { fill: #666; flex: none; margin-top: 11px; margin-bottom: 10px; }
.thumb { width: 28px; height: 1563px; background: #bcbcbc; flex: none; }
.arrow-d { margin-top: 217px; fill: #333; }
```
